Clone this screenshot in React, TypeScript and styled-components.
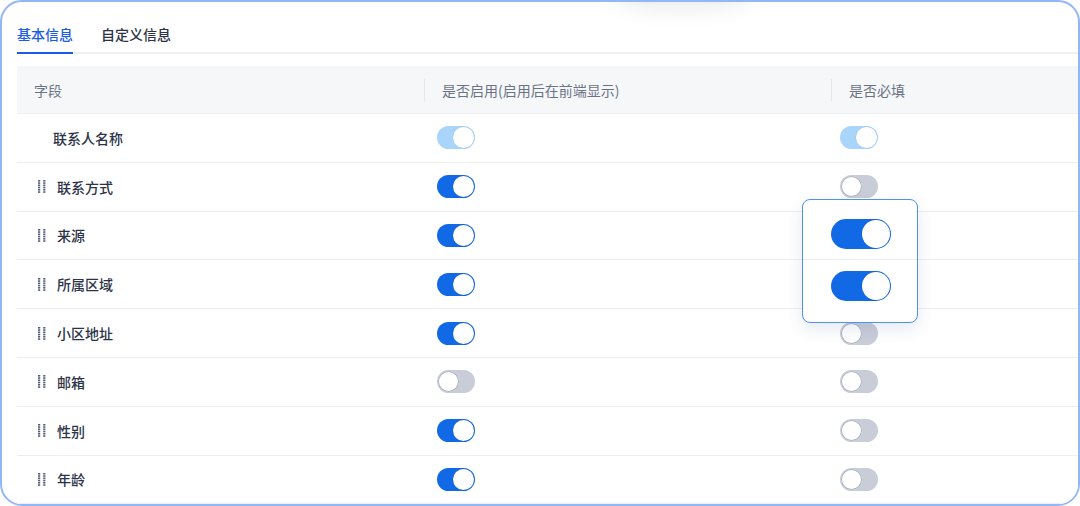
import React from "react";
import styled, { createGlobalStyle, css } from "styled-components";

const Global = createGlobalStyle`
  html, body { margin: 0; padding: 0; background: #ffffff; }
  body { font-family: "Noto Sans CJK SC", "Noto Sans", sans-serif; }
  * { box-sizing: border-box; }
`;

const Card = styled.div`
  position: relative;
  width: 1080px;
  height: 506px;
  border: 2px solid #92b6fa;
  border-radius: 22px;
  background: #fff;
  overflow: hidden;
  padding: 0 0 0 15px;
`;

const TopShadow = styled.div`
  position: absolute;
  top: -36px;
  left: 608px;
  width: 144px;
  height: 36px;
  border-radius: 50%;
  box-shadow: 0 6px 24px rgba(0, 0, 0, 0.09);
`;

const TabBar = styled.div`
  display: flex;
  gap: 28px;
  height: 52px;
  border-bottom: 2px solid #eef0f3;
  align-items: flex-end;
`;

const Tab = styled.div<{ $active?: boolean }>`
  line-height: 20px;
  padding-bottom: 8px;
  font-size: 14px;
  font-weight: 500;
  color: ${(p) => (p.$active ? "#1a5ce8" : "#2b3245")};
  margin-bottom: -2px;
  border-bottom: 2px solid ${(p) => (p.$active ? "#1a5ce8" : "transparent")};
`;

const Table = styled.div`
  margin-top: 12px;
  width: 1240px;
`;

const Row = styled.div<{ $head?: boolean }>`
  display: grid;
  grid-template-columns: 407px 407px 426px;
  height: ${(p) => (p.$head ? "48px" : "48.8px")};
  border-bottom: 1px solid #eceef2;
  background: ${(p) => (p.$head ? "#f6f7f9" : "#fff")};
  align-items: center;
`;

const HeadCell = styled.div<{ $sep?: boolean }>`
  padding-left: 17px;
  font-size: 14px;
  color: #6a7386;
  height: 100%;
  display: flex;
  align-items: center;
  ${(p) =>
    p.$sep &&
    css`
      border-left: 1px solid #e4e6eb;
      height: 22px;
    `}
`;

const NameCell = styled.div<{ $indent: number }>`
  display: flex;
  align-items: center;
  gap: 11px;
  padding-left: ${(p) => p.$indent}px;
  font-size: 14px;
  font-weight: 500;
  color: #2c3347;
`;

const SwitchCell = styled.div<{ $pad: number }>`
  display: flex;
  align-items: center;
  padding-left: ${(p) => p.$pad}px;
`;

type Mode = "on" | "off" | "dim";

const Track = styled.div<{ $mode: Mode; $big?: boolean }>`
  position: relative;
  width: ${(p) => (p.$big ? "60px" : "38px")};
  height: ${(p) => (p.$big ? "30px" : "23px")};
  border-radius: 999px;
  background: ${(p) =>
    p.$mode === "on" ? "#1169e6" : p.$mode === "dim" ? "#a9d5fb" : "#c9cdd8"};
`;

const Knob = styled.div<{ $mode: Mode; $big?: boolean }>`
  position: absolute;
  top: 1px;
  width: ${(p) => (p.$big ? "28px" : "21px")};
  height: ${(p) => (p.$big ? "28px" : "21px")};
  border-radius: 50%;
  background: #fff;
  ${(p) => (p.$mode === "off" ? "left: 1px;" : "right: 1px;")}
  box-shadow: ${(p) =>
    p.$mode === "off" ? "inset 0 0 0 1px #aab0be" : "0 0 0 0.5px rgba(0,0,0,0.05)"};
`;

const Switch = ({ mode, big }: { mode: Mode; big?: boolean }) => (
  <Track $mode={mode} $big={big}>
    <Knob $mode={mode} $big={big} />
  </Track>
);

const Handle = () => (
  <svg width="8" height="13" viewBox="0 0 8 13">
    {[0, 1, 2, 3, 4, 5].map((i) => (
      <g key={i} fill="#56607a">
        <rect x="0" y={i * 2.25} width="2.2" height="1.6" />
        <rect x="5.2" y={i * 2.25} width="2.2" height="1.6" />
      </g>
    ))}
  </svg>
);

const Popover = styled.div`
  position: absolute;
  left: 800px;
  top: 197px;
  width: 116px;
  height: 124px;
  background: #fff;
  border: 1px solid #4f90f2;
  border-radius: 8px;
  box-shadow: 0 6px 16px rgba(40, 70, 140, 0.12);
  display: flex;
  flex-direction: column;
  padding: 8px 0 11px;
`;

const PopRow = styled.div<{ $line?: boolean }>`
  flex: 1;
  display: flex;
  align-items: center;
  justify-content: center;
  padding-left: 1px;
  ${(p) => p.$line && "border-bottom: 1px solid #eceef2;"}
`;

const rows: { name: string; handle: boolean; a: Mode; b: Mode }[] = [
  { name: "联系人名称", handle: false, a: "dim", b: "dim" },
  { name: "联系方式", handle: true, a: "on", b: "off" },
  { name: "来源", handle: true, a: "on", b: "off" },
  { name: "所属区域", handle: true, a: "on", b: "off" },
  { name: "小区地址", handle: true, a: "on", b: "off" },
  { name: "邮箱", handle: true, a: "off", b: "off" },
  { name: "性别", handle: true, a: "on", b: "off" },
  { name: "年龄", handle: true, a: "on", b: "off" },
];

export default function App() {
  return (
    <>
      <Global />
      <Card>
        <TopShadow />
        <TabBar>
          <Tab $active>基本信息</Tab>
          <Tab>自定义信息</Tab>
        </TabBar>
        <Table>
          <Row $head>
            <HeadCell>字段</HeadCell>
            <HeadCell $sep>是否启用(启用后在前端显示)</HeadCell>
            <HeadCell $sep>是否必填</HeadCell>
          </Row>
          {rows.map((r) => (
            <Row key={r.name}>
              <NameCell $indent={r.handle ? 21 : 36}>
                {r.handle && <Handle />}
                {r.name}
              </NameCell>
              <SwitchCell $pad={13}>
                <Switch mode={r.a} />
              </SwitchCell>
              <SwitchCell $pad={9}>
                <Switch mode={r.b} />
              </SwitchCell>
            </Row>
          ))}
        </Table>
        <Popover>
          <PopRow $line>
            <Switch mode="on" big />
          </PopRow>
          <PopRow>
            <Switch mode="on" big />
          </PopRow>
        </Popover>
      </Card>
    </>
  );
}
